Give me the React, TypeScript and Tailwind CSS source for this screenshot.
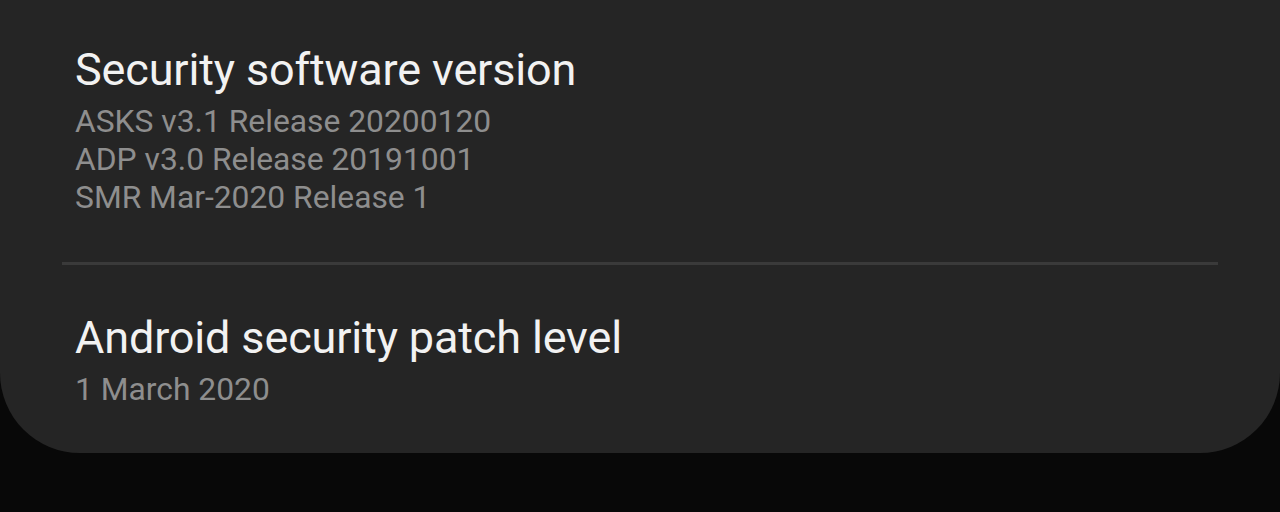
const sections = [
  {
    title: 'Security software version',
    lines: ['ASKS v3.1 Release 20200120', 'ADP v3.0 Release 20191001', 'SMR Mar-2020 Release 1'],
  },
  {
    title: 'Android security patch level',
    lines: ['1 March 2020'],
  },
];

export default function App() {
  return (
    <div className="w-full h-[512px] bg-[#080808] overflow-hidden" style={{ fontFamily: 'Roboto, "Noto Sans", sans-serif' }}>
      <div className="bg-[#252525] rounded-b-[80px] pt-[46px] pb-[45px]">
        {sections.map((s, i) => (
          <div key={s.title}>
            {i > 0 && <div className="mx-[62px] h-[3px] bg-[#3a3a3a] mt-[46px] mb-[49px]" />}
            <div className="px-[75px]">
              <h2 className="text-[45px] leading-[48px] text-[#f2f2f2] tracking-[-0.15px]">{s.title}</h2>
              <div className="mt-[8px]">
                {s.lines.map((l) => (
                  <p key={l} className="text-[31.8px] leading-[38px] text-[#8e8e8e]">{l}</p>
                ))}
              </div>
            </div>
          </div>
        ))}
      </div>
    </div>
  );
}
